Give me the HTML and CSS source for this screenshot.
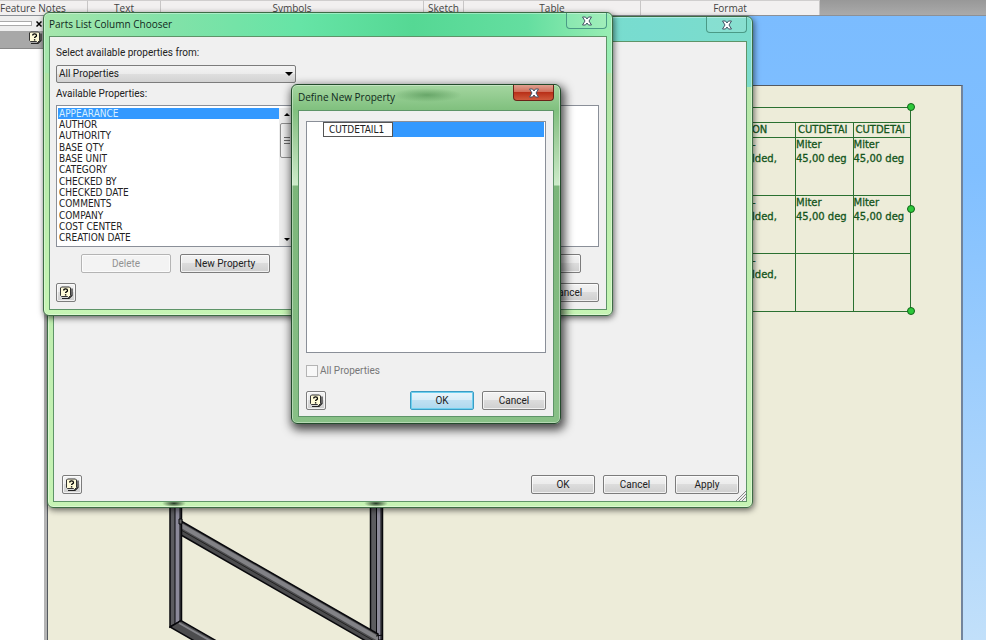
FILE: index.html
```html
<!DOCTYPE html>
<html lang="en">
<head>
<meta charset="utf-8">
<title>Parts List Column Chooser</title>
<link rel="stylesheet" href="styles.css">
</head>
<body>
<svg class="defs" aria-hidden="true">
  <symbol id="help" viewBox="0 0 14 14">
    <path d="M2.500 1h8l1 1v7.500l-2 2-1-1H2.500l-1-1V2z" fill="#fffbd8" stroke="#333" stroke-width="1"/>
    <path d="M3 12.500h7l3-3V2.500" fill="none" stroke="#222" stroke-width="1.200"/>
    <path d="M4.700 4.500q0-1.600 1.900-1.600t1.900 1.500q0 1-1.100 1.500-.8.400-.8 1.200" fill="none" stroke="#000" stroke-width="1.300"/>
    <path d="M5.900 8.200h1.400v1.300H5.900z" fill="#000"/>
  </symbol>
  <symbol id="close" viewBox="0 0 12 10">
    <path d="M1.500 1H4.500L6 3 7.500 1h3L8 5l2.500 4h-3L6 7 4.500 9h-3L4 5z" fill="#fff" stroke="#456" stroke-width="1"/>
  </symbol>
</svg>

<div class="app">
  <header class="ribbon">
    <span class="panel-name panel-first">Feature Notes</span>
    <span class="panel-name">Text</span>
    <span class="panel-name">Symbols</span>
    <span class="panel-name">Sketch</span>
    <span class="panel-name">Table</span>
    <span class="panel-name">Format</span>
    <span class="ribbon-rest"></span>
  </header>

  <div class="workspace">
    <aside class="browser">
      <div class="grip-bar"><span class="grip"></span><button class="dock-close" aria-label="Close panel"><svg viewBox="0 0 6 6"><path d="M.5.5l5 5M5.500.5l-5 5" stroke="#000" stroke-width="1.500"/></svg></button></div>
      <div class="browser-bar"><svg class="help-icon"><use href="#help"/></svg></div>
    </aside>
    <main class="canvas">
      <div class="sheet">
        <table class="parts">
          <colgroup><col class="col-desc"><col><col></colgroup>
          <thead>
            <tr class="parts-title"><td colspan="3"></td></tr>
            <tr><th>ON</th><th class="cut">CUTDETAI</th><th class="cut">CUTDETAI</th></tr>
          </thead>
          <tbody>
            <tr><td>-<br>lded,</td><td>Miter<br>45,00 deg</td><td>Miter<br>45,00 deg</td></tr>
            <tr><td>-<br>lded,</td><td>Miter<br>45,00 deg</td><td>Miter<br>45,00 deg</td></tr>
            <tr><td>-<br>lded,</td><td></td><td></td></tr>
          </tbody>
        </table>
        <i class="handle handle-top"></i><i class="handle handle-mid"></i><i class="handle handle-end"></i>
        <svg class="frame" viewBox="169 500 215 140" aria-hidden="true">
          <g stroke="#08080c" stroke-width="1.500">
            <path d="M370.500 500h12v140h-12z" fill="#5c5c60"/>
            <path d="M376.500 500h4.500v140h-4.500z" fill="#8c8a9a" stroke-width="1"/>
            <path d="M181 521L378 634V648L181 535z" fill="#4c4c4e"/>
            <path d="M181 523L378 636V641L181 528z" fill="#828286" stroke="none"/>
            <path d="M181 530L376 642" stroke="#222" stroke-width="1"/>
            <path d="M170 500h11.500v121l-11.500 6z" fill="#5c5c60"/>
            <path d="M175 500h5v121l-5 3z" fill="#8c8a9a" stroke-width="1"/>
            <path d="M179 519h3v5h-3z" fill="#666" stroke-width="1"/>
            <path d="M170 627l11-6.500L220 643h-22z" fill="#4c4c4e"/>
            <path d="M179 623l37 21" stroke="#85858a" stroke-width="2"/>
            <path d="M376 636l7-1" stroke-width="1"/>
          </g>
        </svg>
      </div>
    </main>
  </div>
</div>

<section class="window win-back" aria-label="Parts list">
  <div class="titlebar"><h2></h2><button class="close" aria-label="Close"><svg><use href="#close"/></svg></button></div>
  <div class="client">
    <div class="actions">
      <button class="btn help" aria-label="Help"><svg class="help-icon"><use href="#help"/></svg></button>
      <span class="spring"></span>
      <button class="btn">OK</button><button class="btn">Cancel</button><button class="btn">Apply</button>
    </div>
    <svg class="resize" viewBox="0 0 10 10" aria-hidden="true"><path d="M0 10L10 0M3 10l7-7M6 10l4-4" stroke="#888" stroke-width="1"/></svg>
  </div>
</section>

<section class="window win-chooser" aria-labelledby="chooser-title">
  <div class="titlebar"><h2 id="chooser-title">Parts List Column Chooser</h2><button class="close" aria-label="Close"><svg><use href="#close"/></svg></button></div>
  <div class="client">
    <label class="field-label" for="source">Select available properties from:</label>
    <div class="combo"><select id="source"><option>All Properties</option></select><svg viewBox="0 0 8 4" aria-hidden="true"><path d="M0 0h8L4 4z"/></svg></div>
    <label class="field-label" for="available">Available Properties:</label>
    <div class="lists">
      <div class="listbox">
        <select id="available" size="12">
          <option selected>APPEARANCE</option><option>AUTHOR</option><option>AUTHORITY</option><option>BASE QTY</option><option>BASE UNIT</option><option>CATEGORY</option><option>CHECKED BY</option><option>CHECKED DATE</option><option>COMMENTS</option><option>COMPANY</option><option>COST CENTER</option><option>CREATION DATE</option>
        </select>
        <div class="scroll" aria-hidden="true">
          <svg viewBox="0 0 6 3"><path d="M0 3h6L3 0z"/></svg>
          <div class="thumb"></div>
          <svg viewBox="0 0 6 3"><path d="M0 0h6L3 3z"/></svg>
        </div>
      </div>
      <div class="chosen"></div>
    </div>
    <div class="list-actions">
      <button class="btn wide" disabled>Delete</button><button class="btn wide">New Property</button>
      <span class="spring"></span>
      <button class="btn wide" aria-label="Move Down"></button>
    </div>
    <div class="actions">
      <button class="btn help" aria-label="Help"><svg class="help-icon"><use href="#help"/></svg></button>
      <span class="spring"></span>
      <button class="btn">Cancel</button>
    </div>
  </div>
</section>

<section class="window win-define" aria-labelledby="define-title">
  <div class="titlebar"><h2 id="define-title">Define New Property</h2><button class="close" aria-label="Close"><svg><use href="#close"/></svg></button></div>
  <div class="client">
    <div class="new-list"><div class="new-row"><input type="text" value="CUTDETAIL1" aria-label="Property name"></div></div>
    <label class="check"><input type="checkbox" disabled>All Properties</label>
    <div class="actions">
      <button class="btn help" aria-label="Help"><svg class="help-icon"><use href="#help"/></svg></button>
      <span class="spring"></span>
      <button class="btn default">OK</button><button class="btn">Cancel</button>
    </div>
  </div>
</section>
</body>
</html>
```
FILE: styles.css
```css
* { box-sizing: border-box; }
:root { --ui: Roboto, "Liberation Sans", sans-serif; --caps: "DejaVu Sans Condensed", "Noto Sans", sans-serif; }
body { margin: 0; height: 100vh; overflow: hidden; position: relative; font: 10px/12px var(--ui); color: #222; }
button, input, select { font: inherit; color: inherit; margin: 0; }
.defs { position: absolute; width: 0; height: 0; }
.spring { flex: 1; }

/* Application behind the dialogs */
.app { height: 100%; display: flex; flex-direction: column; }
.ribbon { display: grid; grid-template-columns: 88px 73px 263px 40px 177px 179px 1fr; height: 16px; background: #f2f0f0; border-bottom: 1px solid #8c9096; }
.panel-name { border-top: 1px solid #d0cece; border-right: 1px solid #c8c6c6; text-align: center; line-height: 14px; color: #444; white-space: nowrap; font-family: "Open Sans", sans-serif; }
.panel-first { padding-right: 26px; }
.ribbon-rest { background: linear-gradient(#989898, #aaa); }
.workspace { flex: 1; display: flex; min-height: 0; }
.browser { width: 47px; background: #fff; border-right: 3px solid #b4b4b4; }
.grip-bar { height: 15px; display: flex; align-items: center; gap: 4px; background: #eee; }
.grip { width: 32px; height: 5px; border: 1px solid #aaa; border-left: 0; background: #fff; }
.dock-close { display: flex; padding: 0; border: 0; background: none; }
.dock-close svg { width: 6px; height: 6px; }
.browser-bar { height: 18px; display: flex; justify-content: flex-end; padding-right: 2px; background: #a8a8a8; border-bottom: 1px solid #888; }
.help-icon { width: 14px; height: 14px; flex: none; }
.canvas { flex: 1; display: flex; padding-top: 69px; padding-right: 23px; background: linear-gradient(#7bbcff, #80bfff 25%, #c2e0fa); }
.sheet { flex: 1; position: relative; background: #edecd9; border: 1px solid #555a60; border-bottom: 0; border-right: 2px solid #72849c; padding: 21px 50px 0 0; }
.parts { margin-left: auto; width: 160px; table-layout: fixed; border-collapse: collapse; color: #14551c; border: 1px solid #2a7030; }
.parts th, .parts td { border: 1px solid #2a7030; padding: 0; text-align: left; vertical-align: top; font: 500 10px/14px "DejaVu Sans", "Noto Sans", sans-serif; white-space: nowrap; -webkit-text-stroke: 0.3px currentColor; }
.parts tr { height: 58px; }
.parts thead tr { height: 15px; }
.parts .cut { padding-left: 2px; }
.parts .col-desc { width: 44px; }
.handle { position: absolute; right: 46px; width: 8px; height: 8px; border: 1px solid #13641a; border-radius: 50%; background: #2dc93a; }
.handle-top { top: 17px; }
.handle-mid { top: 119px; }
.handle-end { top: 221px; }
.frame { position: absolute; left: 121px; top: 414px; width: 215px; height: 140px; }

/* Glass windows */
.window { position: absolute; display: flex; flex-direction: column; padding: 0 5px 5px; border: 1px solid #3d6b45; border-radius: 6px; box-shadow: inset 0 0 0 1px #ffffff60, 1px 2px 6px #0009; }
.titlebar { display: flex; align-items: flex-start; justify-content: space-between; height: 24px; }
.titlebar h2 { margin: 0; font: 10px/22px "Open Sans", sans-serif; color: #10281c; white-space: nowrap; }
.close { width: 41px; height: 16px; display: grid; place-items: center; padding: 0; border: 1px solid #4a9a86; border-top: 0; border-radius: 0 0 4px 4px; background: #ffffff18; }
.close svg { width: 12px; height: 10px; }
.client { flex: 1; display: flex; flex-direction: column; background: #f0f0f0; border: 1px solid #5e9468; padding: 8px 6px; }
.actions { display: flex; gap: 8px; }
.btn { width: 64px; height: 19px; padding: 0; border: 1px solid #7c7c7c; border-radius: 2px; background: linear-gradient(#f3f3f3, #ebebeb 49%, #dcdcdc 50%, #cfcfcf); box-shadow: inset 0 0 0 1px #ffffffb0; line-height: 15px; text-align: center; }
.btn:disabled { color: #929292; border-color: #b4b4b4; background: #f3f3f3; }
.btn.default { border-color: #3c9cc4; background: linear-gradient(#eaf5fb, #d8edf8 49%, #bfe0f2 50%, #aed8ee); box-shadow: inset 0 0 0 1px #6fd0ef; }
.btn.wide { width: 90px; }
.btn.help { width: 20px; display: grid; place-items: center; }

.win-back { left: 47px; top: 16px; width: 706px; height: 492px; background: radial-gradient(closest-side, #263a26, transparent) 114px 100% / 24px 7px no-repeat, radial-gradient(closest-side, #263a26, transparent) 316px 100% / 24px 7px no-repeat, linear-gradient(90deg, #7ee0ae, #78dcd0 85%, #7cdccb) 0 0 / 100% 70px no-repeat, linear-gradient(#b4e6a8, #c6f3b4); }
.win-back .client { position: relative; justify-content: flex-end; padding: 8px 7px 7px 8px; }
.resize { position: absolute; right: 0; bottom: 0; width: 10px; height: 10px; }

.win-chooser { left: 43px; top: 12px; width: 570px; height: 304px; background: linear-gradient(90deg, #a6e6ac, #82e2a8 22%, #66e4a6 45%, #55d894 65%, #64dea0 85%, #9aeeb4) 0 0 / 100% 60px no-repeat, linear-gradient(#a8dfa0, #c6f5b4); }
.win-chooser .client { padding: 9px 7px 7px 6px; }
.field-label { line-height: 14px; }
.combo { position: relative; width: 240px; margin: 5px 0 4px; }
.combo select { display: block; width: 100%; height: 18px; appearance: none; border: 1px solid #7c7c7c; border-radius: 2px; padding: 0 2px; background: linear-gradient(#f4f4f4, #ebebeb 49%, #dedede 50%, #d2d2d2); }
.combo svg { position: absolute; right: 3px; top: 7px; width: 8px; height: 4px; }
.lists { display: flex; justify-content: space-between; margin-top: 4px; }
.listbox { display: flex; width: 240px; height: 142px; background: #fff; border: 1px solid #8a8f98; padding: 2px 1px 0; }
.listbox select { flex: 1; height: 138px; border: 0; padding: 0; outline: 0; background: #fff; font-family: var(--caps); scrollbar-width: none; border-radius: 0; }
.listbox option { height: 11px; min-height: 0; line-height: 11px; padding: 0 1px; }
.listbox option:nth-child(3n) { height: 12px; }
.listbox option:checked { background: linear-gradient(#39f, #39f); -webkit-text-fill-color: #d8f0ff; }
.scroll { width: 15px; display: flex; flex-direction: column; align-items: center; padding: 5px 0; background: #ececec; }
.scroll > svg { width: 6px; height: 3px; }
.thumb { width: 14px; height: 35px; margin: 7px 0 auto; border: 1px solid #8d8d8d; border-radius: 2px; background: repeating-linear-gradient(#666 0 1px, transparent 1px 3px) center / 6px 7px no-repeat, linear-gradient(90deg, #f2f2f2, #d4d4d4); }
.chosen { width: 200px; background: #fff; border: 1px solid #8a8f98; }
.list-actions { display: flex; gap: 9px; padding: 7px 18px 10px 25px; }

.win-define { left: 291px; top: 84px; width: 270px; height: 340px; border-color: #234b2c; background: radial-gradient(ellipse at center, #4d8f50a0, transparent 70%) 100px 3px / 70px 14px no-repeat, linear-gradient(#a4d6a0, #80c07e 25px, #9ccc98 50px, #cdebc9 100px, #7cb67a 101px, #88c086); padding: 0 6px 6px; box-shadow: inset 0 0 0 1px #ffffff60, 2px 4px 10px 2px #000000b0; }
.win-define .titlebar { height: 25px; }
.win-define .titlebar h2 { line-height: 24px; }
.win-define .close { border-color: #6b2218; background: linear-gradient(#e0a090, #cf6a55 49%, #b93018 50%, #cf5a3c); }
.win-define .client { padding: 10px 7px 5px; }
.new-list { height: 232px; background: #fff; border: 1px solid #8a8f98; padding: 0 1px 0 16px; }
.new-row { display: flex; background: #39f; }
.new-row input { width: 70px; height: 15px; padding: 0 5px; border: 1px solid #555; border-radius: 0; background: #fff; outline: 0; font-family: var(--caps); }
.check { display: flex; align-items: center; gap: 2px; margin: 12px 0 14px; color: #777; }
.check input { appearance: none; width: 12px; height: 12px; border: 1px solid #b4b4b4; background: #f8f8f8; }
```
